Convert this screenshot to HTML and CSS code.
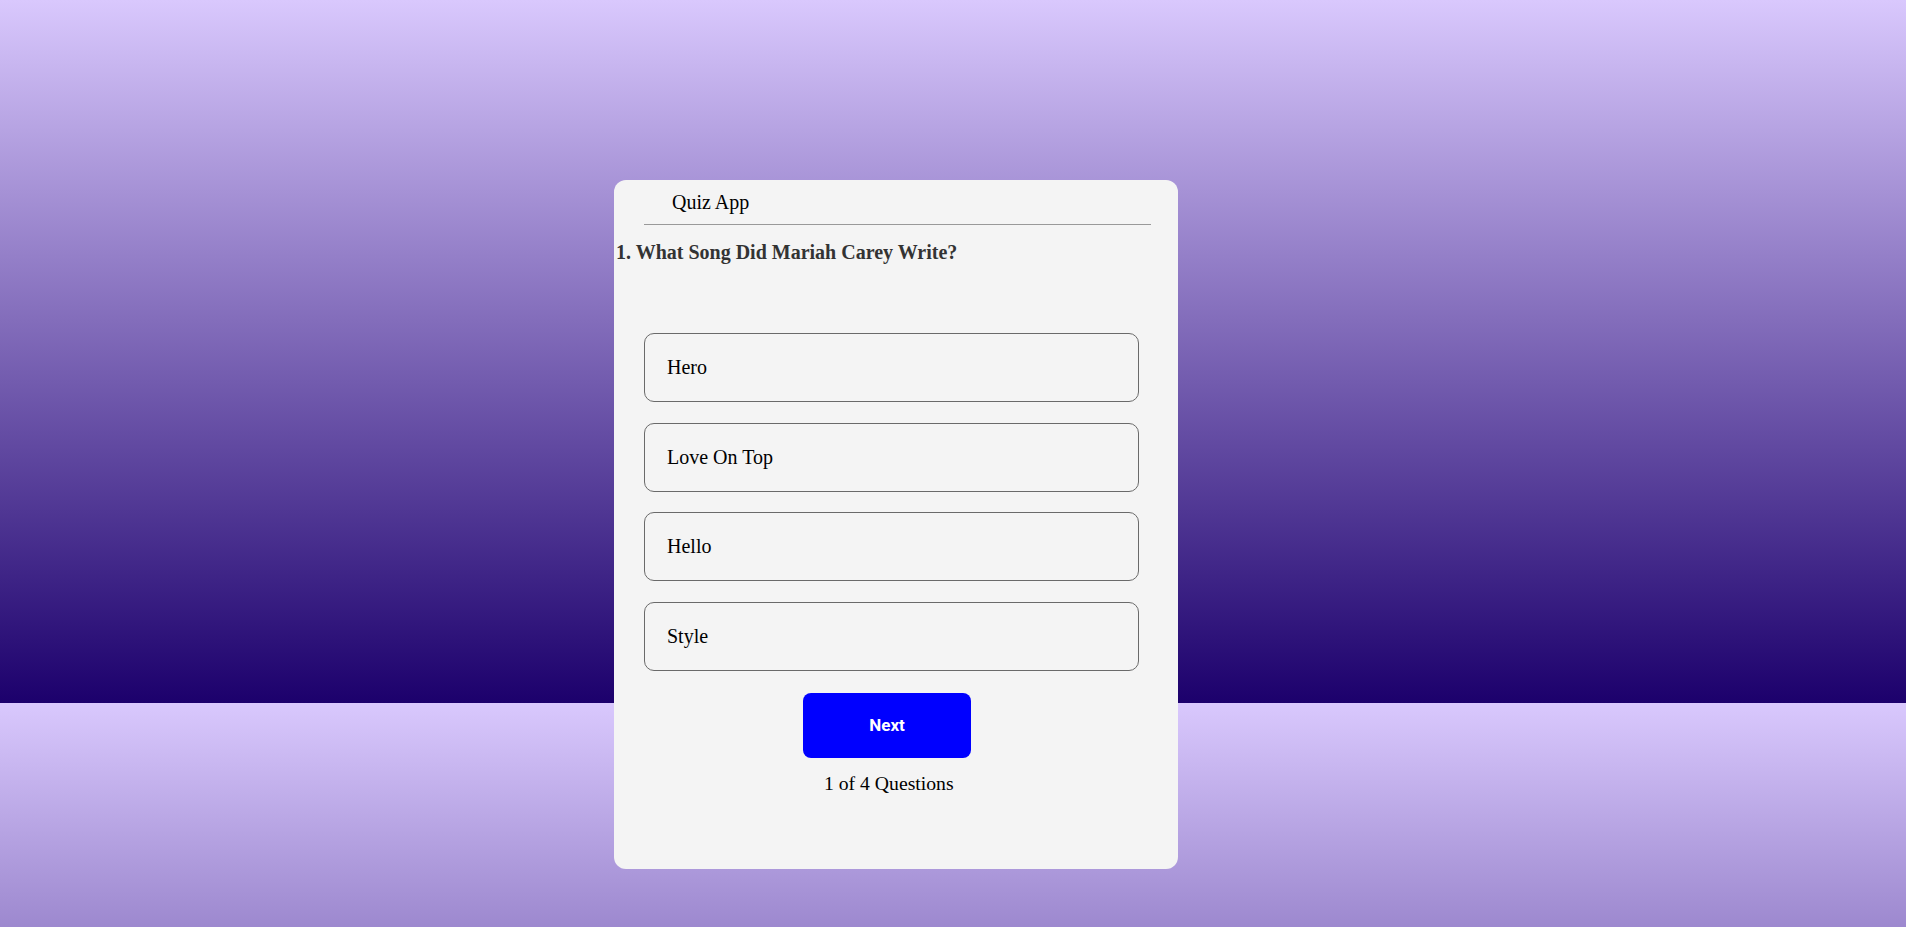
FILE: index.html
```html
<!DOCTYPE html>
<html lang="en">
<head>
<meta charset="utf-8">
<title>Quiz App</title>
<link rel="stylesheet" href="styles.css">
</head>
<body>
<div class="page">
  <main class="card">
    <header class="card-head">
      <div class="app-title">Quiz App</div>
      <hr class="divider">
    </header>
    <h2 class="question">1. What Song Did Mariah Carey Write?</h2>
    <div class="options">
      <button class="option">Hero</button>
      <button class="option">Love On Top</button>
      <button class="option">Hello</button>
      <button class="option">Style</button>
    </div>
    <div class="actions">
      <button class="next">Next</button>
      <div class="progress">1 of 4 Questions</div>
    </div>
  </main>
</div>
</body>
</html>
```
FILE: styles.css
```css
html {
  background-image: linear-gradient(#d9c8fd, #1c006c);
  background-size: 100% 703px;
  background-repeat: repeat;
}
body {
  margin: 0;
  font-family: "Liberation Serif", "Times New Roman", serif;
}
.page {
  padding: 180px 0 0 614px;
}
.card {
  box-sizing: border-box;
  width: 564px;
  height: 689px;
  background: #f4f4f4;
  border-radius: 12px;
  display: flex;
  flex-direction: column;
}
.card-head {
  padding: 10px 27px 0 30px;
}
.app-title {
  font-size: 20px;
  line-height: 24px;
  padding-left: 28px;
  color: #000;
}
.divider {
  margin: 10px 0 0;
  border: 0;
  height: 1px;
  background: #999;
}
.question {
  margin: 15px 0 0 2px;
  font-size: 20px;
  line-height: 24px;
  font-weight: bold;
  color: #333;
}
.options {
  margin: 69px 0 0 30px;
  width: 495px;
  display: flex;
  flex-direction: column;
  gap: 20.5px;
}
.option {
  box-sizing: border-box;
  height: 69px;
  display: flex;
  align-items: center;
  padding: 0 0 0 22px;
  border: 1px solid #6a6a6a;
  border-radius: 10px;
  background: #f4f4f4;
  font-family: "Liberation Serif", "Times New Roman", serif;
  font-size: 20px;
  color: #000;
  text-align: left;
}
.actions {
  margin-top: 22px;
  display: flex;
  flex-direction: column;
  align-items: flex-start;
  padding-left: 189px;
}
.next {
  width: 168px;
  height: 65px;
  border: 0;
  border-radius: 8px;
  background: #0000ff;
  color: #fff;
  font-family: Roboto, "Liberation Sans", Arial, sans-serif;
  font-weight: 700;
  font-size: 17px;
}
.progress {
  margin-top: 13px;
  margin-left: 21px;
  font-size: 19.7px;
  line-height: 24px;
  color: #000;
}
```
